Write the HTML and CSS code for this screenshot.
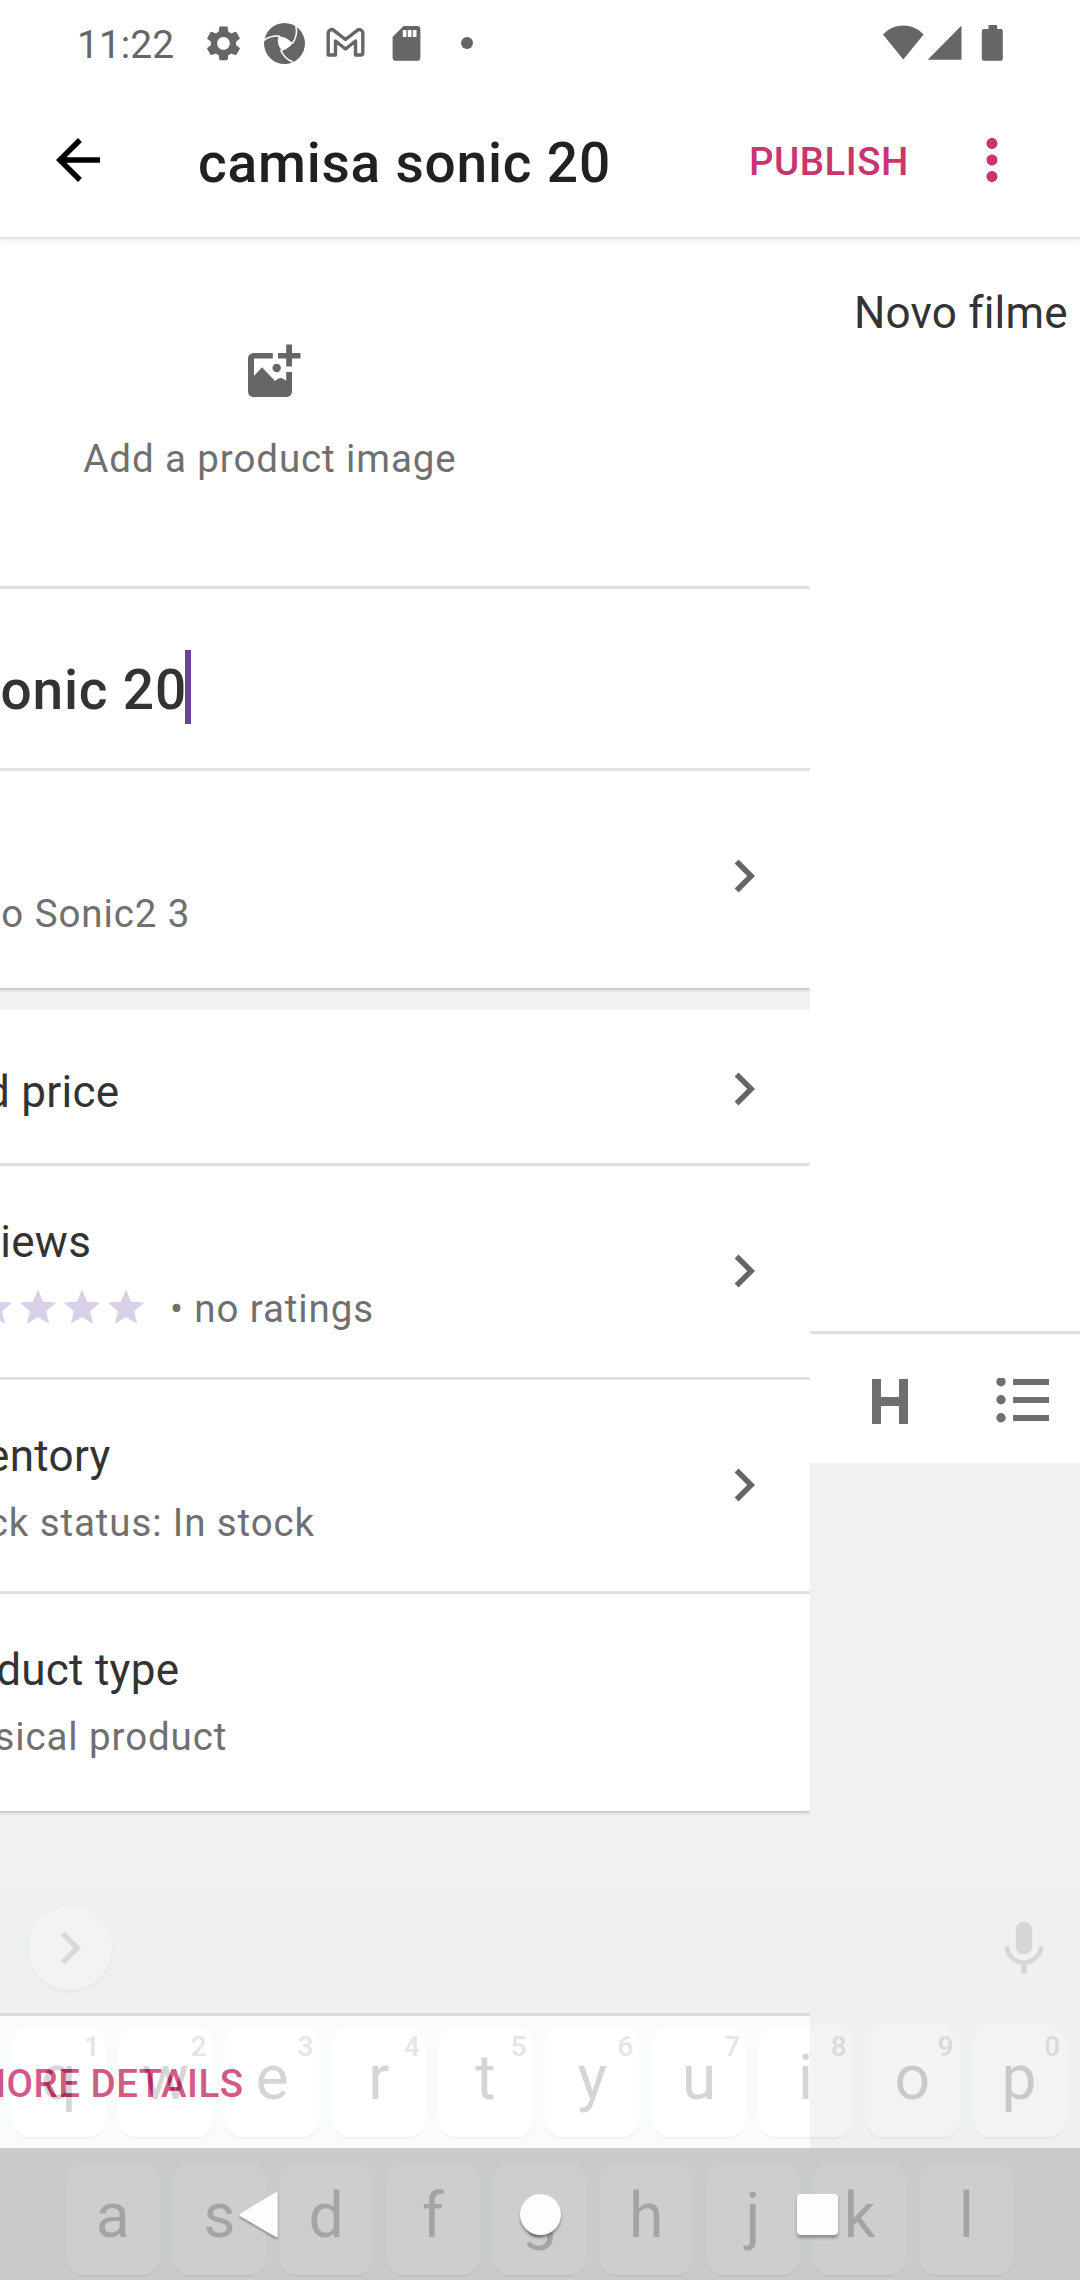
FILE: index.html
```html
<!DOCTYPE html>
<html lang="en">
<head>
<meta charset="utf-8">
<title>camisa sonic 20</title>
<link rel="stylesheet" href="styles.css">
</head>
<body>
<div class="screen">
  <svg class="defs" width="0" height="0" aria-hidden="true">
    <defs>
      <path id="chevron" d="M10 6L8.59 7.41 13.17 12l-4.58 4.59L10 18l6-6z"/>
      <path id="star" d="M12 17.27L18.18 21l-1.64-7.03L22 9.24l-7.19-.61L12 2 9.19 8.63 2 9.24l5.46 4.73L5.82 21z"/>
    </defs>
  </svg>

  <header class="top">
    <div class="status">
      <span class="clock">11:22</span>
      <svg class="status-left" width="290" height="60" viewBox="190 14 290 60">
        <g transform="translate(202.500 22.400) scale(1.750)"><path d="M19.14 12.94c.04-.3.06-.61.06-.94 0-.32-.02-.64-.07-.94l2.030-1.580c.18-.14.23-.41.12-.61l-1.920-3.320c-.12-.22-.37-.29-.59-.22l-2.390.96c-.5-.38-1.030-.7-1.620-.94l-.36-2.540c-.04-.24-.24-.41-.48-.41h-3.840c-.24 0-.43.17-.47.41l-.36 2.540c-.59.24-1.130.57-1.620.94l-2.390-.96c-.22-.08-.47 0-.59.22L2.740 8.870c-.12.21-.08.47.12.61l2.030 1.580c-.05.3-.09.63-.09.94s.02.64.07.94l-2.030 1.580c-.18.14-.23.41-.12.61l1.920 3.320c.12.22.37.29.59.22l2.390-.96c.5.38 1.030.7 1.620.94l.36 2.540c.05.24.24.41.48.41h3.840c.24 0 .44-.17.47-.41l.36-2.540c.59-.24 1.130-.56 1.620-.94l2.390.96c.22.08.47 0 .59-.22l1.920-3.320c.12-.22.07-.47-.12-.61l-2.010-1.580zM12 15.600c-1.980 0-3.600-1.620-3.600-3.600s1.620-3.600 3.600-3.600 3.600 1.620 3.600 3.600-1.620 3.600-3.600 3.600z"/></g>
        <circle cx="284.500" cy="43.500" r="20.500"/>
        <g class="swirl">
          <path class="hole" d="M278.500 36.300Q286 36.500 292.700 43.300Q288.500 48.500 282 51Q276 44 278.500 36.300z"/>
          <path d="M263.500 40.500Q271 35 280 36.300"/>
          <path d="M296 26Q298 36 292.300 43.500"/>
          <path d="M280.700 50Q284 58.500 293 62"/>
        </g>
        <path class="mail" d="M328.200 55V33a3.500 3.500 0 0 1 5.600-2.700L345.500 39.500l11.700-9.200a3.500 3.500 0 0 1 5.600 2.700V53a2 2 0 0 1-2 2H355.500V41l-10 8-10-8V55H330.200a2 2 0 0 1-2-2z"/>
        <path fill-rule="evenodd" d="M403.500 26h13.500a3.400 3.400 0 0 1 3.400 3.400v28a3.400 3.400 0 0 1-3.400 3.400h-21a3.400 3.400 0 0 1-3.400-3.400V37zM402.800 30v7h3.700v-7zm5 0v7h3.700v-7zm5 0v7h3.700v-7z"/>
        <circle cx="467" cy="43" r="6"/>
      </svg>
      <svg class="status-right" width="130" height="60" viewBox="878 14 130 60">
        <path d="M883 34.500C894 22.500 912.500 22.500 923.600 34.500L903.300 59.500z"/>
        <path d="M961.500 25.500V59.700H927.700z"/>
        <path d="M988.500 25h8.600v4h3.700a2 2 0 0 1 2 2v27.700a2 2 0 0 1-2 2h-17a2 2 0 0 1-2-2V31a2 2 0 0 1 2-2h4.700z"/>
      </svg>
    </div>
    <div class="toolbar">
      <svg class="back" width="66" height="66" viewBox="0 0 24 24"><path d="M20 11H7.830l5.590-5.590L12 4l-8 8 8 8 1.410-1.410L7.830 13H20v-2z"/></svg>
      <h1 class="title">camisa sonic 20</h1>
      <span class="publish">PUBLISH</span>
      <svg class="more" width="66" height="66" viewBox="0 0 24 24"><path d="M12 8c1.100 0 2-.9 2-2s-.9-2-2-2-2 .9-2 2 .9 2 2 2zm0 2c-1.100 0-2 .9-2 2s.9 2 2 2 2-.9 2-2-.9-2-2-2zm0 6c-1.100 0-2 .9-2 2s.9 2 2 2 2-.9 2-2-.9-2-2-2z"/></svg>
    </div>
  </header>

  <div class="panes">
    <main class="product">
      <section class="card first">
        <div class="photo">
          <svg width="66" height="66" viewBox="237 337 66 66">
            <path d="M286.200 344.500h5.800v8.500h8.500v5.600H292v8h-5.800v-8H278V353h8.200z"/>
            <path d="M253.500 353H272.800v5.600H254V376L262 367.300 275 381Q280.500 375 286.200 381V372H292V391.500a5.500 5.500 0 0 1-5.500 5.500h-33a5.500 5.500 0 0 1-5.500-5.500v-33a5.500 5.500 0 0 1 5.500-5.500z"/>
            <circle cx="276.700" cy="368" r="4.200"/>
          </svg>
          <span class="sub">Add a product image</span>
        </div>
        <div class="name"><span>camisa sonic 20</span><i class="cursor"></i></div>
        <div class="row desc">
          <div class="text"><span class="sub">Novo filme do Sonic2 3</span></div>
          <svg class="chev" width="66" height="66" viewBox="0 0 24 24"><use href="#chevron"/></svg>
        </div>
      </section>
      <section class="card">
        <div class="row price">
          <div class="text"><span class="label">Add price</span></div>
          <svg class="chev" width="66" height="66" viewBox="0 0 24 24"><use href="#chevron"/></svg>
        </div>
        <div class="row">
          <div class="text">
            <span class="label">Reviews</span>
            <span class="sub rating">
              <svg class="stars" width="220" height="44" viewBox="0 0 122 24.400">
                <use href="#star" x="0.200"/><use href="#star" x="24.600"/><use href="#star" x="49"/><use href="#star" x="73.400"/><use href="#star" x="97.800"/>
              </svg>
              <span>• no ratings</span>
            </span>
          </div>
          <svg class="chev" width="66" height="66" viewBox="0 0 24 24"><use href="#chevron"/></svg>
        </div>
        <div class="row">
          <div class="text"><span class="label">Inventory</span><span class="sub">Stock status: In stock</span></div>
          <svg class="chev" width="66" height="66" viewBox="0 0 24 24"><use href="#chevron"/></svg>
        </div>
        <div class="row last">
          <div class="text"><span class="label">Product type</span><span class="sub">Physical product</span></div>
        </div>
      </section>
      <footer class="details"><span>ADD MORE DETAILS</span></footer>
    </main>

    <aside class="editor">
      <div class="doc">Novo filme</div>
      <div class="format">
        <svg width="36" height="45" viewBox="0 0 36 45"><path d="M0 0h9v18h18V0h9v45h-9V27H9v18H0z"/></svg>
        <svg width="54" height="48" viewBox="996 1378 54 48">
          <circle cx="1001" cy="1381.800" r="4.700"/><circle cx="1001" cy="1399.800" r="4.700"/><circle cx="1001" cy="1417.800" r="4.700"/>
          <path d="M1013 1379h36v6h-36zM1013 1397h36v6h-36zM1013 1415h36v6h-36z"/>
        </svg>
      </div>
    </aside>
  </div>

  <div class="nav-scrim"></div>

  <div class="keyboard">
    <div class="suggest">
      <div class="expand"><svg width="66" height="66" viewBox="0 0 24 24"><use href="#chevron"/></svg></div>
      <svg class="mic" width="66" height="66" viewBox="0 0 24 24"><path d="M12 14c1.660 0 3-1.340 3-3V5c0-1.660-1.340-3-3-3S9 3.340 9 5v6c0 1.660 1.340 3 3 3zm5.300-3c0 3-2.540 5.100-5.300 5.100S6.700 14 6.700 11H5c0 3.410 2.720 6.230 6 6.720V21h2v-3.280c3.280-.48 6-3.300 6-6.720h-1.700z"/></svg>
    </div>
    <div class="keys">
      <div class="key">q<sup>1</sup></div><div class="key">w<sup>2</sup></div><div class="key">e<sup>3</sup></div><div class="key">r<sup>4</sup></div><div class="key">t<sup>5</sup></div><div class="key">y<sup>6</sup></div><div class="key">u<sup>7</sup></div><div class="key">i<sup>8</sup></div><div class="key">o<sup>9</sup></div><div class="key">p<sup>0</sup></div>
    </div>
    <div class="keys middle">
      <div class="key">a</div><div class="key">s</div><div class="key">d</div><div class="key">f</div><div class="key">g</div><div class="key">h</div><div class="key">j</div><div class="key">k</div><div class="key">l</div>
    </div>
  </div>

  <nav class="nav">
    <svg width="44" height="52" viewBox="236 2188 44 52"><path d="M277.700 2194v41.500q0 2.600-2.400 1.200L240.300 2216.200q-2-1.400 0-2.800L275.300 2192.500q2.400-1.400 2.400 1.500z"/></svg>
    <i class="home"></i>
    <i class="recent"></i>
  </nav>
</div>
</body>
</html>
```
FILE: styles.css
```css
* { box-sizing: border-box; }
body { margin: 0; background: #fff; font-family: Roboto, "Noto Sans", sans-serif; }
svg { display: block; flex: none; }
.defs { position: absolute; }
.screen { position: relative; width: 1080px; height: 2280px; overflow: hidden; background: #f1f1f1; display: flex; flex-direction: column; }

/* Status bar and toolbar */
.top { position: relative; z-index: 1; flex: none; height: 237px; background: #fff; box-shadow: 0 2px 3px rgba(0,0,0,.1), 0 3px 12px rgba(0,0,0,.06); }
.status { display: flex; height: 83px; padding: 14px 72px 0 77px; fill: #666; }
.clock { width: 113px; font-size: 39px; line-height: 62px; color: #666; white-space: nowrap; }
.status-right { margin-left: auto; }
.swirl { fill: none; stroke: #fff; stroke-width: 1.600; }
.swirl .hole { fill: #fff; stroke: none; }
.mail { fill: none; stroke: #666; stroke-width: 3.400; stroke-linejoin: round; }
.toolbar { display: flex; align-items: center; height: 154px; padding: 0 55px 0 45px; }
.title { flex: 1; margin: 0; padding: 6px 0 0 87px; font-size: 55px; font-weight: 500; line-height: 70px; letter-spacing: .8px; color: #212121; white-space: nowrap; }
.publish { width: 210px; padding-top: 3px; font-size: 38.500px; font-weight: 500; letter-spacing: .5px; color: #c9356e; }
.more { fill: #c9356e; }

/* Sliding panes */
.panes { display: flex; flex: none; height: 1911px; }
.product { display: flex; flex-direction: column; flex: none; width: 1080px; margin-left: -270px; }
.card { flex: none; background: #fff; box-shadow: 0 1px 4px rgba(0,0,0,.3); clip-path: inset(0 0 -8px 0); }
.card.first { margin-bottom: 22px; }
.photo { display: flex; flex-direction: column; align-items: center; height: 352px; padding-top: 100px; border-bottom: 3px solid #e0e0e0; fill: #666; }
.sub { font-size: 38.500px; line-height: 66px; letter-spacing: .9px; color: #707070; white-space: nowrap; }
.photo .sub { margin-top: 23px; }
.name { display: flex; height: 182px; padding: 61px 0 0 44px; border-bottom: 3px solid #e0e0e0; font-size: 55px; font-weight: 500; line-height: 80px; letter-spacing: .8px; color: #333; white-space: nowrap; }
.cursor { width: 6px; height: 74px; margin-left: -2px; background: #674399; }
.row { display: flex; align-items: center; justify-content: space-between; height: 214px; padding: 0 33px 1px 198px; border-bottom: 3px solid #e0e0e0; }
.row.desc { height: 217px; padding: 0 33px 8px 44px; border: 0; }
.row.price { height: 156px; padding-top: 5px; }
.row.last { height: 217px; padding-bottom: 7px; border: 0; }
.text { display: flex; flex-direction: column; padding-top: 9px; }
.desc .text { padding-top: 77px; }
.price .text { padding: 7px 0 0 3px; }
.label { font-size: 44px; line-height: 67px; letter-spacing: .27px; color: #333; white-space: nowrap; }
.rating { display: flex; align-items: center; gap: 22px; }
.stars { margin-bottom: 2px; fill: #d8d0e6; }
.chev { fill: #666; }
.details { flex: none; display: flex; align-items: center; height: 135px; margin-top: auto; padding: 3px 0 0 155px; border-top: 3px solid #d6d6d6; background: #fff; font-size: 38.500px; font-weight: 500; letter-spacing: .5px; color: #c9356e; white-space: nowrap; }

.editor { flex: 1; display: flex; flex-direction: column; min-width: 0; }
.doc { height: 1094px; padding: 50px 0 0 44px; background: #fff; font-size: 44px; line-height: 52px; letter-spacing: .2px; color: #333; white-space: nowrap; }
.format { display: flex; align-items: center; justify-content: space-between; height: 132px; padding: 6px 30px 0 62px; border-top: 3px solid #e0e0e0; background: #fff; fill: #6f6f6f; }

/* Fading keyboard above the page */
.nav-scrim { flex: none; height: 132px; background: #c3c3c3; }
.keyboard { position: absolute; left: 0; right: 0; top: 1884px; bottom: 0; opacity: .18; background: #e8f3ee; color: #1b1b1b; }
.suggest { display: flex; align-items: center; justify-content: space-between; height: 128px; padding: 0 23px 0 28px; fill: #5d5f5e; }
.mic { margin-top: 2px; }
.expand { display: flex; align-items: center; justify-content: center; width: 84px; height: 84px; border-radius: 50%; background: #fff; box-shadow: 0 2px 5px rgba(0,0,0,.25); fill: #717171; }
.keys { display: grid; grid-template-columns: repeat(10, 94.500px); column-gap: 12.200px; padding: 14px 0 0 11.500px; }
.keys.middle { grid-template-columns: repeat(9, 94.500px); padding: 27px 0 0 65.500px; }
.key { position: relative; height: 111px; border-radius: 18px; background: #fff; box-shadow: 0 2px 0 #b8babc; font-size: 62.500px; line-height: 103px; text-align: center; }
.key sup { position: absolute; right: 6px; top: 5px; font-size: 28px; font-weight: 600; line-height: 32px; color: #787878; }

/* System navigation */
.nav { position: absolute; left: 0; right: 0; bottom: 0; display: flex; align-items: center; justify-content: space-between; height: 132px; padding: 0 242px 0 236px; fill: #fdfdfd; }
.nav svg { filter: drop-shadow(0 2px 1px rgba(0,0,0,.3)); }
.home, .recent { width: 41px; height: 41px; background: #fdfdfd; box-shadow: 0 3px 3px rgba(0,0,0,.3); }
.home { margin-left: 3px; border-radius: 50%; }
.recent { border-radius: 4px; }
```
